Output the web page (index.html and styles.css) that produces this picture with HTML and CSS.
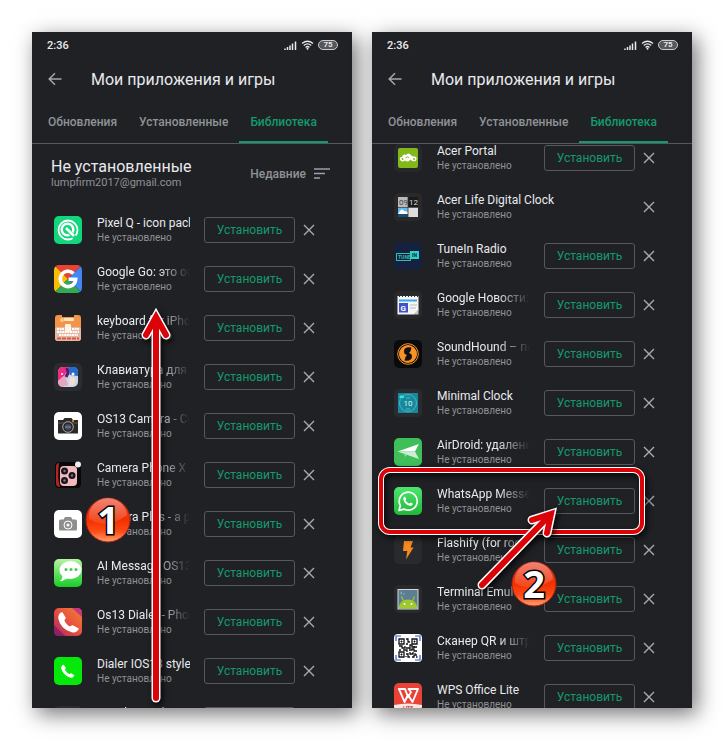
FILE: index.html
```html
<!DOCTYPE html>
<html lang="ru">
<head>
  <meta charset="UTF-8">
  <meta name="viewport" content="width=device-width, initial-scale=1.0">
  <title>Мои приложения и игры</title>
  <link rel="stylesheet" href="styles.css">
</head>
<body>

  <!-- shared symbols -->
  <svg class="defs" aria-hidden="true">
    <defs>
      <symbol id="signal" viewBox="0 0 13 9">
        <path d="M1 9V7.500M3.500 9V6M6 9V4.500M8.500 9V2.500M11.500 9V.5" stroke="#e8eaed" stroke-width="1.500" fill="none"/>
      </symbol>
      <symbol id="wifi" viewBox="0 0 13 10">
        <path d="M1 3.500Q6.500-1 12 3.500M2.800 5.500Q6.500 2.300 10.200 5.500M4.600 7.400Q6.500 5.700 8.400 7.400" stroke="#e8eaed" stroke-width="1.300" fill="none"/>
        <circle cx="6.500" cy="8.800" r="1" fill="#e8eaed"/>
      </symbol>
      <symbol id="back" viewBox="0 0 14 14">
        <path d="M13.500 7H1.500M7 1.200L1.200 7L7 12.800" stroke="#a4a7ab" stroke-width="1.500" fill="none"/>
      </symbol>
      <symbol id="cross" viewBox="0 0 12 12">
        <path d="M1 1L11 11M11 1L1 11" stroke="#a9abae" stroke-width="1.400" fill="none"/>
      </symbol>
      <linearGradient id="ball" x1="0" y1="0" x2="0" y2="1">
        <stop offset="0" stop-color="#e8402a"/>
        <stop offset=".5" stop-color="#f23000"/>
        <stop offset=".75" stop-color="#ff4a14"/>
        <stop offset="1" stop-color="#ffa070"/>
      </linearGradient>
      <linearGradient id="shine" x1="0" y1="0" x2="0" y2="1">
        <stop offset="0" stop-color="#fff" stop-opacity=".35"/>
        <stop offset="1" stop-color="#fff" stop-opacity=".1"/>
      </linearGradient>
    </defs>
  </svg>

  <main class="screens">

    <section class="phone">
      <div class="status">
        <span class="time">2:36</span>
        <svg class="signal"><use href="#signal"/></svg>
        <svg class="wifi"><use href="#wifi"/></svg>
        <span class="battery">75</span>
      </div>
      <header>
        <button class="back" aria-label="Назад"><svg><use href="#back"/></svg></button>
        <h1>Мои приложения и игры</h1>
      </header>
      <nav>
        <a href="#updates">Обновления</a>
        <a href="#installed">Установленные</a>
        <a href="#library" class="active">Библиотека</a>
      </nav>

      <div class="content">
        <div class="library-head">
          <div>
            <h2>Не установленные</h2>
            <p>lumpfirm2017@gmail.com</p>
          </div>
          <button class="sort">Недавние
            <svg viewBox="0 0 16 11"><path d="M0 1H16M0 5.500H11M0 10H6" stroke="#9aa0a6" stroke-width="1.500"/></svg>
          </button>
        </div>

        <ul class="apps">
          <li>
            <svg class="icon" viewBox="0 0 28 28"><rect width="28" height="28" rx="5" fill="#12d67c"/><circle cx="14" cy="14" r="9.500" fill="none" stroke="#fff" stroke-width="1.800"/><circle cx="13.500" cy="13.500" r="5.800" fill="none" stroke="#fff" stroke-width="2.500"/><path d="M11 11L21 22" stroke="#12d67c" stroke-width="4"/><path d="M12 12L20 20" stroke="#fff" stroke-width="2.500"/></svg>
            <div class="info"><h3>Pixel Q - icon pack</h3><p>Не установлено</p></div>
            <button class="install">Установить</button>
            <button class="remove" aria-label="Удалить"><svg><use href="#cross"/></svg></button>
          </li>
          <li>
            <svg class="icon" viewBox="0 0 28 28"><clipPath id="round"><rect width="28" height="28" rx="5"/></clipPath><g clip-path="url(#round)"><path d="M0 0H28L14 14Z" fill="#ea4335"/><path d="M0 0L14 14L0 28Z" fill="#fbbc05"/><path d="M0 28L14 14L28 28Z" fill="#34a853"/><path d="M28 0L14 14L28 28Z" fill="#4285f4"/></g><path d="M19.500 8.500A7.700 7.700 0 1 0 21.700 14.200H14.500" fill="none" stroke="#fff" stroke-width="3.600"/></svg>
            <div class="info fade"><h3>Google Go: это обновленный</h3><p>Не установлено</p></div>
            <button class="install">Установить</button>
            <button class="remove" aria-label="Удалить"><svg><use href="#cross"/></svg></button>
          </li>
          <li>
            <svg class="icon" viewBox="0 0 28 28"><rect x="1" y="1" width="26" height="26" rx="3" fill="#f3944b"/><rect x="1" y="13" width="26" height="14" rx="3" fill="#e6b7a2"/><path d="M8 1H20V3H8Z" fill="#222"/><circle cx="8" cy="6" r="2" fill="#f8c890"/><rect x="10" y="4" width="10" height="3" rx="1" fill="#ffe2bd"/><rect x="11" y="10" width="6" height="8" rx="1" fill="#fff3e3"/><path d="M3 15H10M18 15H25M3 18H25M5 21H24" stroke="#fff" stroke-width="1.800" stroke-dasharray="2 .6"/><path d="M3 24.500H25" stroke="#d45b4b" stroke-width="2" stroke-dasharray="4 1"/></svg>
            <div class="info fade"><h3>keyboard for iPhone 11</h3><p>Не установлено</p></div>
            <button class="install">Установить</button>
            <button class="remove" aria-label="Удалить"><svg><use href="#cross"/></svg></button>
          </li>
          <li>
            <svg class="icon" viewBox="0 0 28 28"><rect width="28" height="28" rx="5" fill="#2b2c31"/><rect x="4" y="4" width="20" height="20" rx="5" fill="#c4d9ec"/><path d="M4 9Q4 4 9 4H14L11 12L4 18Z" fill="#ee2b83"/><path d="M14 4H20Q24 4 24 9V13L16 12Z" fill="#2b69ca"/><path d="M4 18L11 12L14 22L8 24Q4 23 4 18Z" fill="#e8a5bd"/><path d="M16 13L22 16L20 22L15 23Z" fill="#f7dcd2"/><path d="M13 5L14 10L12 14" stroke="#5a176e" stroke-width="3" fill="none"/><circle cx="8" cy="11" r="1" fill="#fff"/><circle cx="19" cy="11" r="1.500" fill="#fff"/></svg>
            <div class="info fade"><h3>Клавиатура для iPhone</h3><p>Не установлено</p></div>
            <button class="install">Установить</button>
            <button class="remove" aria-label="Удалить"><svg><use href="#cross"/></svg></button>
          </li>
          <li>
            <svg class="icon" viewBox="0 0 28 28"><rect width="28" height="28" rx="5" fill="#fff"/><path d="M4 8H9L10.500 6H17.500L19 8H24V21.500H4Z" fill="#2b2a2a"/><path d="M4 11H24" stroke="#5c5752"/><circle cx="14" cy="15" r="5.300" fill="#252525" stroke="#aaa" stroke-width="1"/><circle cx="14" cy="15" r="3.300" fill="#3f4b5a"/><path d="M11 15H17" stroke="#8493a5"/><circle cx="19" cy="9" r="1" fill="#e89b28"/></svg>
            <div class="info fade"><h3>OS13 Camera - Cool i13</h3><p>Не установлено</p></div>
            <button class="install">Установить</button>
            <button class="remove" aria-label="Удалить"><svg><use href="#cross"/></svg></button>
          </li>
          <li>
            <svg class="icon" viewBox="0 0 28 28"><rect x="1" y="1" width="26" height="26" rx="4" fill="#090808"/><path d="M5 2Q2 2 2 6V22Q2 26 6 26Q3 17 5 2Z" fill="#b62425"/><rect x="6" y="5" width="17" height="20" rx="4" fill="#f0b9bd"/><circle cx="10.500" cy="10" r="3.500" fill="#17151b"/><circle cx="18" cy="14.500" r="3.500" fill="#17151b"/><circle cx="10.500" cy="19.500" r="3.500" fill="#17151b"/><g fill="#7d7485"><circle cx="10.500" cy="10" r="1.200"/><circle cx="18" cy="14.500" r="1.200"/><circle cx="10.500" cy="19.500" r="1.200"/></g><circle cx="24" cy="3.500" r="3" fill="#eee"/></svg>
            <div class="info fade"><h3>Camera Phone X - i11</h3><p>Не установлено</p></div>
            <button class="install">Установить</button>
            <button class="remove" aria-label="Удалить"><svg><use href="#cross"/></svg></button>
          </li>
          <li>
            <svg class="icon" viewBox="0 0 28 28"><rect width="28" height="28" rx="5" fill="#fff"/><path d="M6.500 9.500H9.500L11 7H17L18.500 9.500H21.500Q23 9.500 23 11V19Q23 20.500 21.500 20.500H6.500Q5 20.500 5 19V11Q5 9.500 6.500 9.500Z" fill="#8e8e8e"/><circle cx="14" cy="15" r="4" fill="#8e8e8e" stroke="#fff" stroke-width="1"/><circle cx="14" cy="15" r="1.500" fill="#fff"/></svg>
            <div class="info fade"><h3>Camera Plus - a photo</h3><p>Не установлено</p></div>
            <button class="install">Установить</button>
            <button class="remove" aria-label="Удалить"><svg><use href="#cross"/></svg></button>
          </li>
          <li>
            <svg class="icon" viewBox="0 0 28 28"><linearGradient id="msg" x1="0" y1="0" x2="0" y2="1"><stop offset="0" stop-color="#b7f3a4"/><stop offset="1" stop-color="#17ce25"/></linearGradient><rect width="28" height="28" rx="5" fill="url(#msg)"/><ellipse cx="16.500" cy="11" rx="11" ry="9" fill="#fff"/><path d="M9 16L7 22L15 19Z" fill="#fff"/><path d="M9.500 19Q8 21.500 5.500 21.500Q7.500 23.500 11 20" fill="#e9ffe8"/><g fill="#45c84e"><circle cx="12" cy="10.500" r="1.500"/><circle cx="17" cy="10.500" r="1.500"/><circle cx="22" cy="10.500" r="1.500"/></g></svg>
            <div class="info fade"><h3>AI Message OS13 - New</h3><p>Не установлено</p></div>
            <button class="install">Установить</button>
            <button class="remove" aria-label="Удалить"><svg><use href="#cross"/></svg></button>
          </li>
          <li>
            <svg class="icon" viewBox="0 0 28 28"><linearGradient id="dial" x1="0" y1="1" x2="1" y2="0"><stop offset="0" stop-color="#a6245f"/><stop offset=".5" stop-color="#e8503f"/><stop offset="1" stop-color="#f18332"/></linearGradient><rect width="28" height="28" rx="5" fill="url(#dial)"/><path d="M18 0H23Q28 0 28 5V9Z" fill="#c7377f"/><path d="M0 17L11 28H5Q0 28 0 23Z" fill="#8d2069"/><path d="M8 5L11 10L9.500 12Q11 17 16 19.500L18.500 18L24 21Q22 24.500 18 23.500Q7 20.500 5 10Q5 6 8 5Z" fill="#fff" stroke="#fff" stroke-width="1.500" stroke-linejoin="round"/></svg>
            <div class="info fade"><h3>Os13 Dialer - Phone X</h3><p>Не установлено</p></div>
            <button class="install">Установить</button>
            <button class="remove" aria-label="Удалить"><svg><use href="#cross"/></svg></button>
          </li>
          <li>
            <svg class="icon" viewBox="0 0 28 28"><rect width="28" height="28" rx="5" fill="#05e80b"/><path d="M9.500 8L11.500 11L10.500 12.500Q12 16 15.500 17.500L17 16.500L20 18.500Q19 21 16.500 20.300Q9 18 7.500 11Q7.500 8.500 9.500 8Z" fill="#fff" stroke="#fff" stroke-width=".8" stroke-linejoin="round"/></svg>
            <div class="info"><h3>Dialer IOS13 style</h3><p>Не установлено</p></div>
            <button class="install">Установить</button>
            <button class="remove" aria-label="Удалить"><svg><use href="#cross"/></svg></button>
          </li>
          <li>
            <svg class="icon" viewBox="0 0 28 28"><rect width="28" height="28" rx="5" fill="#2b2c2f"/></svg>
            <div class="info fade"><h3>Weather Widget OS13</h3><p>Не установлено</p></div>
            <button class="install">Установить</button>
            <button class="remove" aria-label="Удалить"><svg><use href="#cross"/></svg></button>
          </li>
        </ul>
      </div>

      <svg class="marks" aria-hidden="true">
        <g class="arrow outline"><path d="M124 666V287"/><path d="M114 303L124 285L134 303"/></g>
        <g class="arrow"><path d="M124 666V287"/><path d="M114 303L124 285L134 303"/></g>
        <g class="badge">
          <circle cx="76" cy="488" r="22" fill="url(#ball)" stroke="#a82410"/>
          <path d="M57 487A19 19 0 0 1 95 483Q76 498 57 487Z" fill="url(#shine)"/>
          <text x="76" y="502">1</text>
        </g>
      </svg>
    </section>

    <section class="phone">
      <div class="status">
        <span class="time">2:36</span>
        <svg class="signal"><use href="#signal"/></svg>
        <svg class="wifi"><use href="#wifi"/></svg>
        <span class="battery">75</span>
      </div>
      <header>
        <button class="back" aria-label="Назад"><svg><use href="#back"/></svg></button>
        <h1>Мои приложения и игры</h1>
      </header>
      <nav>
        <a href="#updates">Обновления</a>
        <a href="#installed">Установленные</a>
        <a href="#library" class="active">Библиотека</a>
      </nav>

      <div class="content">
        <ul class="apps scrolled">
          <li>
            <svg class="icon" viewBox="0 0 28 28"><rect width="28" height="28" rx="5" fill="#26282e"/><rect x="4" y="4" width="20" height="20" rx="2" fill="#83b81a"/><path d="M8 13Q9 9.500 12 11Q14 8 17 11Q18 13 21 12.500Q24 14 21.500 17Q18 18 16.500 15.500Q14 19 11 16.500Q8 18.500 6 16Q5 13 8 13Z" fill="#fff"/><circle cx="8.500" cy="15" r="1" fill="#83b81a"/><circle cx="20" cy="15" r="1" fill="#83b81a"/><path d="M11.500 14Q13.500 11.500 15 14" stroke="#83b81a" fill="none"/></svg>
            <div class="info"><h3>Acer Portal</h3><p>Не установлено</p></div>
            <button class="install">Установить</button>
            <button class="remove" aria-label="Удалить"><svg><use href="#cross"/></svg></button>
          </li>
          <li>
            <svg class="icon" viewBox="0 0 28 28"><rect width="28" height="28" rx="5" fill="#29292b"/><rect x="4" y="4" width="20" height="20" fill="#ddd"/><rect x="4" y="4" width="10" height="10" fill="#b9babb"/><rect x="14" y="4" width="10" height="10" fill="#1a1a1b"/><path d="M4 15H14V21H4Z" fill="#62b9eb"/><path d="M4 21H14V24H4Z" fill="#16506d"/><path d="M6 18Q8 15 10 18L14 19V21H4Z" fill="#fff"/><path d="M14 4V24M4 14.500H24" stroke="#3a3a3b" stroke-width=".8"/><text class="tiny" x="5" y="12" fill="#444">09</text><text class="tiny" x="15" y="12" fill="#ddd">12</text></svg>
            <div class="info"><h3>Acer Life Digital Clock</h3><p>Не установлено</p></div>
            <button class="remove" aria-label="Удалить"><svg><use href="#cross"/></svg></button>
          </li>
          <li>
            <svg class="icon" viewBox="0 0 28 28"><rect width="28" height="28" rx="5" fill="#16203f"/><rect x="2.500" y="11.500" width="14" height="7" fill="#15223c" stroke="#31bdb4"/><rect x="16" y="9" width="9" height="8" fill="#2ed3c5"/><text class="micro" x="4" y="17" fill="#31bdb4">TUNE</text><text class="micro" x="18" y="15" fill="#16203f">IN</text></svg>
            <div class="info"><h3>TuneIn Radio</h3><p>Не установлено</p></div>
            <button class="install">Установить</button>
            <button class="remove" aria-label="Удалить"><svg><use href="#cross"/></svg></button>
          </li>
          <li>
            <svg class="icon" viewBox="0 0 28 28"><rect width="28" height="28" rx="5" fill="#29292b"/><path d="M3.500 5H24.500V19L20 23.500H3.500Z" fill="#f5f5f5"/><path d="M5 5H24" stroke="#333" stroke-width="2" stroke-dasharray="1 2"/><path d="M5 9.500H23" stroke="#36a6ef" stroke-width="2"/><rect x="5" y="12" width="9" height="9.500" fill="#4054c8"/><path d="M16 14H23M16 17H22" stroke="#bbb"/><path d="M24.500 18V23.500H20Z" fill="#c8c8c8"/><text class="letter" x="6.500" y="19.500">G</text></svg>
            <div class="info fade"><h3>Google Новости: всё</h3><p>Не установлено</p></div>
            <button class="install">Установить</button>
            <button class="remove" aria-label="Удалить"><svg><use href="#cross"/></svg></button>
          </li>
          <li>
            <svg class="icon" viewBox="0 0 28 28"><rect width="28" height="28" rx="5" fill="#090a0b"/><circle cx="14" cy="14" r="10.300" fill="none" stroke="#f79226" stroke-width="1"/><circle cx="14" cy="14" r="9" fill="#f79226"/><path d="M17.500 7.500Q10 6.500 10 11.500Q10 14.500 13 15Q11 16.500 10.500 20.500Q18 21.500 18 16.500Q18 13.500 15 13Q17 11.500 17.500 7.500Z" fill="#111"/></svg>
            <div class="info fade"><h3>SoundHound – поиск</h3><p>Не установлено</p></div>
            <button class="install">Установить</button>
            <button class="remove" aria-label="Удалить"><svg><use href="#cross"/></svg></button>
          </li>
          <li>
            <svg class="icon" viewBox="0 0 28 28"><rect width="28" height="28" rx="5" fill="#292b2e"/><rect x="4" y="4" width="20" height="20" fill="#168a9d"/><circle cx="14" cy="14" r="8.500" fill="none" stroke="#60b9c4" stroke-width=".8"/><path d="M5.500 6.500H10V9H5.500Z" fill="#2fe0e8"/><text class="digits" x="14" y="17">10</text><path d="M12 20H16M12 9H16" stroke="#6bc2cc" stroke-width=".8"/></svg>
            <div class="info"><h3>Minimal Clock</h3><p>Не установлено</p></div>
            <button class="install">Установить</button>
            <button class="remove" aria-label="Удалить"><svg><use href="#cross"/></svg></button>
          </li>
          <li>
            <svg class="icon" viewBox="0 0 28 28"><rect width="28" height="28" rx="5" fill="#3fbf59"/><path d="M3.500 13.500L25 6L21 13.500Z" fill="#fff"/><path d="M3.500 13.500L21 13.500L25 21Z" fill="#cdeed4"/><path d="M10 14.500L13 16.500L11 19Z" fill="#9dd9aa"/></svg>
            <div class="info fade"><h3>AirDroid: удаленный</h3><p>Не установлено</p></div>
            <button class="install">Установить</button>
            <button class="remove" aria-label="Удалить"><svg><use href="#cross"/></svg></button>
          </li>
          <li>
            <svg class="icon" viewBox="0 0 28 28"><linearGradient id="wa" x1="0" y1="0" x2="0" y2="1"><stop offset="0" stop-color="#4de56c"/><stop offset="1" stop-color="#1fb83a"/></linearGradient><rect width="28" height="28" rx="5" fill="url(#wa)"/><path d="M5 23.500L6.400 18.600A9 9 0 1 1 10 22.100Z" fill="none" stroke="#fff" stroke-width="1.700" stroke-linejoin="round"/><path d="M11 9.500L12.300 12L11.500 13.200Q12.800 15.700 15.200 16.700L16.500 15.500L19 16.800Q18.500 19 16.300 18.900Q10.500 17.800 9.200 12Q9.400 9.700 11 9.500Z" fill="#fff"/></svg>
            <div class="info fade"><h3>WhatsApp Messenger</h3><p>Не установлено</p></div>
            <button class="install">Установить</button>
            <button class="remove" aria-label="Удалить"><svg><use href="#cross"/></svg></button>
          </li>
          <li>
            <svg class="icon" viewBox="0 0 28 28"><rect width="28" height="28" rx="5" fill="#292a2d"/><path d="M10 5H19L16.500 11.500H19.500L12 23.500L13.300 15H9Z" fill="#f78a1d"/></svg>
            <div class="info fade"><h3>Flashify (for root users)</h3><p>Не установлено</p></div>
            <button class="install">Установить</button>
            <button class="remove" aria-label="Удалить"><svg><use href="#cross"/></svg></button>
          </li>
          <li>
            <svg class="icon" viewBox="0 0 28 28"><rect width="28" height="28" rx="5" fill="#292a2d"/><rect x="4" y="4.500" width="20" height="19.500" fill="#5b7f92" stroke="#d2d8d9"/><path d="M5 23.500V21Q7 14.500 14 14.500Q21 14.500 23 21V23.500Z" fill="#a0c72f"/><path d="M9.500 16L7.500 11.500M18.500 16L20.500 11.500" stroke="#a0c72f" stroke-width="1.200"/><circle cx="10.500" cy="19" r=".9" fill="#fff"/><circle cx="17.500" cy="19" r=".9" fill="#fff"/><path d="M6.500 7L8 8L6.500 9M9 9H10.500" stroke="#d2d8d9" stroke-width=".6" fill="none"/></svg>
            <div class="info fade"><h3>Terminal Emulator for</h3><p>Не установлено</p></div>
            <button class="install">Установить</button>
            <button class="remove" aria-label="Удалить"><svg><use href="#cross"/></svg></button>
          </li>
          <li>
            <svg class="icon" viewBox="0 0 28 28"><rect width="28" height="28" rx="4" fill="#fff"/><path d="M2 7V2H7M21 2H26V7M26 21V26H21M7 26H2V21" fill="none" stroke="#2d62c0" stroke-width="1.200"/><g fill="none" stroke="#111" stroke-width="1.300"><path d="M5 5H10V10H5ZM18 5H23V10H18ZM5 18H10V23H5Z"/><path d="M12 5H14V8H16M12 10H14M5 12H8V14H11V12M12 14H16V11H18V13H23M5 16H7M9 16H13V18M15 16H18V15H20V17H23M12 20H14V23H16M16 18V20H19V18M21 19V21H23M18 23H20V21M12 23V22M22 23H23.500M16 13V15M20 12V14"/></g><path d="M7 7H8V8H7ZM20 7H21V8H20ZM7 20H8V21H7Z" stroke="#111"/></svg>
            <div class="info fade"><h3>Сканер QR и штрих</h3><p>Не установлено</p></div>
            <button class="install">Установить</button>
            <button class="remove" aria-label="Удалить"><svg><use href="#cross"/></svg></button>
          </li>
          <li>
            <svg class="icon" viewBox="0 0 28 28"><rect width="28" height="28" rx="5" fill="#ea4236"/><path d="M0 22Q14 19 28 22V23Q28 28 23 28H5Q0 28 0 23Z" fill="#f6e6e4"/><path d="M4 6H11L14 14L17 9L14.500 6H24L18.500 19L14 12L10.500 19L5 6" fill="none" stroke="#fff" stroke-width="1.900" stroke-linejoin="round"/><text class="lite" x="14" y="27">LITE</text></svg>
            <div class="info"><h3>WPS Office Lite</h3><p>Не установлено</p></div>
            <button class="install">Установить</button>
            <button class="remove" aria-label="Удалить"><svg><use href="#cross"/></svg></button>
          </li>
        </ul>
      </div>

      <svg class="marks" aria-hidden="true">
        <g class="frame">
          <rect class="frame-outline" x="9" y="438" width="261" height="62" rx="9"/>
          <rect x="9" y="438" width="261" height="62" rx="9"/>
        </g>
        <g class="arrow outline"><path d="M110 553L177 484"/><path d="M160 488L179 482L175 501"/></g>
        <g class="arrow"><path d="M110 553L177 484"/><path d="M160 488L179 482L175 501"/></g>
        <g class="badge">
          <circle cx="162" cy="552" r="22" fill="url(#ball)" stroke="#a82410"/>
          <path d="M143 551A19 19 0 0 1 181 547Q162 562 143 551Z" fill="url(#shine)"/>
          <text x="162" y="566">2</text>
        </g>
      </svg>
    </section>

  </main>
</body>
</html>
```

FILE: styles.css
```css
:root {
  --bg: #202125;
  --text: #e8eaed;
  --muted: #8f9296;
  --green: #139a6c;
  --line: #56585c;
  --red: #dc0308;
}

* {
  box-sizing: border-box;
}

body {
  margin: 0;
  background-color: #fff;
  font-family: Roboto, "Liberation Sans", sans-serif;
  color: var(--text);
}

h1, h2, h3, p, ul {
  margin: 0;
  padding: 0;
}

button {
  background: none;
  border: none;
  padding: 0;
  color: inherit;
  font-family: inherit;
  cursor: pointer;
}

.defs {
  position: absolute;
  width: 0;
  height: 0;
}

.screens {
  display: flex;
  gap: 20px;
  height: 100vh;
  padding: 32px;
}

.phone {
  position: relative;
  flex: 1;
  min-width: 0;
  display: flex;
  flex-direction: column;
  background-color: var(--bg);
  box-shadow: 5px 6px 20px rgba(0, 0, 0, 0.55);
}

.status {
  display: flex;
  align-items: center;
  gap: 4px;
  height: 26px;
  padding: 0 14px 0 15px;
}

.time {
  flex: 1;
  font-size: 11px;
  font-weight: 500;
}

.signal {
  width: 13px;
  height: 9px;
}

.wifi {
  width: 13px;
  height: 10px;
}

.battery {
  width: 20px;
  height: 10px;
  border: 1px solid #c8cacc;
  border-radius: 5px;
  background-color: #55575b;
  font-size: 8px;
  font-weight: 700;
  line-height: 8px;
  text-align: center;
}

header {
  display: flex;
  align-items: center;
  gap: 29px;
  height: 42px;
  padding-left: 16px;
}

.back svg {
  display: block;
  width: 14px;
  height: 14px;
}

h1 {
  font-size: 16px;
  font-weight: 400;
}

nav {
  display: flex;
  align-items: stretch;
  height: 44px;
  padding-left: 5px;
  border-bottom: 1px solid var(--line);
}

nav a {
  padding: 0 11px;
  border-bottom: 2px solid transparent;
  color: var(--muted);
  font-size: 12px;
  font-weight: 500;
  line-height: 44px;
  text-decoration: none;
}

nav a.active {
  border-color: var(--green);
  color: var(--green);
}

.content {
  flex: 1;
  min-height: 0;
  overflow: hidden;
}

.library-head {
  display: flex;
  align-items: center;
  justify-content: space-between;
  height: 61px;
  padding: 0 22px 2px 19px;
}

h2 {
  font-size: 16px;
  font-weight: 400;
  line-height: 18px;
}

.library-head p {
  color: var(--muted);
  font-size: 11px;
  line-height: 14px;
}

.sort {
  display: flex;
  align-items: center;
  gap: 8px;
  color: var(--muted);
  font-size: 12px;
  font-weight: 500;
}

.sort svg {
  width: 16px;
  height: 11px;
}

.apps {
  list-style: none;
}

/* list moved up under the tabs */
.scrolled {
  margin-top: -11px;
}

.apps li {
  display: flex;
  align-items: center;
  height: 49px;
  padding: 0 29px 0 22px;
}

.icon {
  flex: none;
  width: 28px;
  height: 28px;
  margin-right: 15px;
}

.info {
  flex: 1;
  min-width: 0;
  padding-top: 1px;
  overflow: hidden;
  white-space: nowrap;
}

.fade h3 {
  -webkit-mask-image: linear-gradient(to right, #000 65%, transparent);
  mask-image: linear-gradient(to right, #000 65%, transparent);
}

h3 {
  font-size: 12px;
  font-weight: 400;
  line-height: 15px;
}

.info p {
  color: var(--muted);
  font-size: 10px;
  line-height: 14px;
}

.install {
  width: 91px;
  height: 26px;
  margin-left: 14px;
  border: 1px solid var(--line);
  border-radius: 3px;
  color: var(--green);
  font-size: 12px;
  font-weight: 400;
}

.remove {
  padding: 0 8px;
}

.remove svg {
  display: block;
  width: 12px;
  height: 12px;
}

/* step marks drawn over the screens */
.marks {
  position: absolute;
  top: 0;
  left: 0;
  width: 100%;
  height: 100%;
  pointer-events: none;
}

.arrow {
  fill: none;
  stroke: var(--red);
  stroke-width: 6;
  stroke-linecap: round;
}

.outline {
  stroke: #fff;
  stroke-width: 9;
  filter: drop-shadow(2px 3px 3px rgba(0, 0, 0, 0.8));
}

.frame rect {
  fill: none;
  stroke: var(--red);
  stroke-width: 4;
}

.frame .frame-outline {
  stroke: #fff;
  stroke-width: 6;
  filter: drop-shadow(2px 3px 3px rgba(0, 0, 0, 0.8));
}

.badge text {
  fill: #fff;
  stroke: #000;
  stroke-width: 3;
  paint-order: stroke;
  font-family: "Noto Sans", sans-serif;
  font-size: 38px;
  font-weight: 700;
  text-anchor: middle;
}

.tiny {
  font-size: 8px;
}

.micro {
  font-size: 5px;
  font-weight: 700;
}

.letter {
  fill: #fff;
  font-size: 8px;
  font-weight: 700;
}

.digits {
  fill: #d6f4f6;
  font-size: 8px;
  text-anchor: middle;
}

.lite {
  fill: #d8392f;
  font-size: 5px;
  font-weight: 700;
  text-anchor: middle;
}
```
